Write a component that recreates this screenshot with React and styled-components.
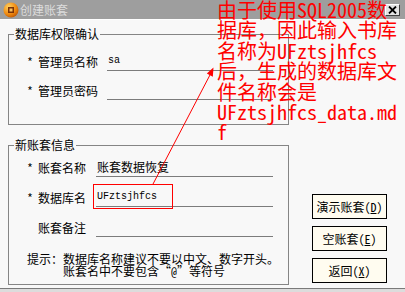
import React from "react";
import styled, { createGlobalStyle } from "styled-components";

const CJK = `"Noto Sans Mono CJK SC", "Noto Sans CJK SC", "Liberation Mono", monospace`;

const GlobalStyle = createGlobalStyle`
  html, body {
    margin: 0;
    padding: 0;
    background: #ffffff;
  }
  body {
    font-family: ${CJK};
    font-size: 12px;
    color: #000;
  }
`;

function App() {
  return (
    <StWindow>
      <GlobalStyle />
      <StTitleBar>
        <StTitleLeft>
          <CoinIcon />
          <StTitleText>创建账套</StTitleText>
        </StTitleLeft>
        <StCloseButton>
          <svg width="9" height="8" viewBox="0 0 9 8">
            <path d="M1 0.5 L8 7.5 M8 0.5 L1 7.5" stroke="#000" strokeWidth="1.8" />
          </svg>
        </StCloseButton>
      </StTitleBar>

      <StBody>
        <StLeftColumn>
          <StGroup $padTop={10} $padBottom={24}>
            <StLegend>数据库权限确认</StLegend>
            <StRows $gap={9}>
              <StRow>
                <StLabel $width={80}>
                  <StStar>*</StStar>管理员名称
                </StLabel>
                <StInput $width={166} $latin>sa</StInput>
              </StRow>
              <StRow>
                <StLabel $width={80}>
                  <StStar>*</StStar>管理员密码
                </StLabel>
                <StInput $width={166} />
              </StRow>
            </StRows>
          </StGroup>

          <StGroup $padTop={5} $padBottom={7}>
            <StLegend>新账套信息</StLegend>
            <StRows $gap={10}>
              <StRow>
                <StLabel $width={69}>
                  <StStar>*</StStar>账套名称
                </StLabel>
                <StInput $width={177}>账套数据恢复</StInput>
              </StRow>
              <StRow>
                <StLabel $width={69}>
                  <StStar>*</StStar>数据库名
                </StLabel>
                <StInput $width={177} $latin>
                  UFztsjhfcs
                  <StHighlight />
                </StInput>
              </StRow>
              <StRow>
                <StLabel $width={69}>
                  <StStar />账套备注
                </StLabel>
                <StInput $width={177} />
              </StRow>
            </StRows>
            <StHint>
              <span>提示：</span>
              <div>
                <div>数据库名称建议不要以中文、数字开头。</div>
                <div>账套名中不要包含“@”等符号</div>
              </div>
            </StHint>
          </StGroup>
        </StLeftColumn>

        <StButtonColumn>
          <StButton>
            演示账套(<u>D</u>)
          </StButton>
          <StButton>
            空账套(<u>E</u>)
          </StButton>
          <StButton>
            返回(<u>X</u>)
          </StButton>
        </StButtonColumn>
      </StBody>

      <StBottomStrip />

      <StNote>
        <div>由于使用SQL2005数</div>
        <div>据库，因此输入书库</div>
        <div>名称为UFztsjhfcs</div>
        <div>后，生成的数据库文</div>
        <div>件名称会是</div>
        <div>UFztsjhfcs_data.md</div>
        <div>f</div>
      </StNote>

      <StArrow width="405" height="292" viewBox="0 0 405 292">
        <line x1="152.5" y1="185" x2="211" y2="73" stroke="#ff0000" strokeWidth="1" />
        <polygon points="213.5,67.5 212.8,76.8 206.8,73.6" fill="#ff0000" />
      </StArrow>
    </StWindow>
  );
}

function CoinIcon() {
  return (
    <svg width="16" height="16" viewBox="0 0 16 16">
      <defs>
        <radialGradient id="coin" cx="0.35" cy="0.3" r="0.8">
          <stop offset="0" stopColor="#ffd060" />
          <stop offset="0.6" stopColor="#f08a10" />
          <stop offset="1" stopColor="#b85000" />
        </radialGradient>
      </defs>
      <circle cx="8" cy="8" r="7.5" fill="url(#coin)" />
      <rect x="5" y="5" width="6" height="6" fill="#7a3208" />
      <rect x="6.5" y="6.5" width="3" height="3" fill="#f6c060" />
    </svg>
  );
}

export default App;

const StWindow = styled.div`
  position: relative;
  width: 405px;
  height: 292px;
  overflow: hidden;
  background: #f8f8f8;
  display: flex;
  flex-direction: column;
`;

const StTitleBar = styled.div`
  height: 19px;
  flex: none;
  background: #9e9e9e;
  border-bottom: 1px solid #ffffff;
  display: flex;
  align-items: center;
  justify-content: space-between;
  padding: 0 5px 0 3px;
`;

const StTitleLeft = styled.div`
  display: flex;
  align-items: center;
  gap: 1px;
`;

const StTitleText = styled.span`
  font-family: "Noto Sans CJK SC", sans-serif;
  font-size: 12px;
  color: #dcdcdc;
`;

const StCloseButton = styled.div`
  width: 15px;
  height: 12px;
  box-sizing: border-box;
  background: #e4e4e4;
  border: 1px solid;
  border-color: #ffffff #404040 #404040 #ffffff;
  display: flex;
  align-items: center;
  justify-content: center;
`;

const StBody = styled.div`
  flex: 1;
  display: flex;
  padding: 7px 0 0 8px;
`;

const StLeftColumn = styled.div`
  width: 281px;
  display: flex;
  flex-direction: column;
  gap: 13px;
`;

const StGroup = styled.fieldset`
  margin: 0;
  padding: ${p => p.$padTop}px 0 ${p => p.$padBottom}px 0;
  border: 1px solid #858585;
  min-width: 0;
`;

const StLegend = styled.legend`
  margin-left: 5px;
  padding: 0 1px;
  font-size: 12px;
  line-height: 14px;
  height: 14px;
`;

const StRows = styled.div`
  display: flex;
  flex-direction: column;
  gap: ${p => p.$gap}px;
`;

const StRow = styled.div`
  display: flex;
  align-items: center;
  height: 20px;
  padding-left: 18px;
`;

const StLabel = styled.div`
  width: ${p => p.$width}px;
  flex: none;
  display: flex;
  align-items: center;
  white-space: nowrap;
`;

const StStar = styled.span`
  display: inline-block;
  width: 11px;
`;

const StInput = styled.div`
  position: relative;
  width: ${p => p.$width}px;
  height: 20px;
  box-sizing: border-box;
  border-bottom: 1px solid #7c7c7c;
  padding-left: 1px;
  display: flex;
  align-items: center;
  white-space: nowrap;
  font-family: ${p => (p.$latin ? `"Liberation Mono", monospace` : CJK)};
  font-size: ${p => (p.$latin ? "10px" : "12px")};
`;

const StHighlight = styled.div`
  position: absolute;
  left: -3px;
  top: -3px;
  width: 80px;
  height: 25px;
  box-sizing: border-box;
  border: 1px solid #ff0000;
`;

const StHint = styled.div`
  display: flex;
  margin-top: 16px;
  padding-left: 18px;
  line-height: 12px;
  white-space: nowrap;
`;

const StButtonColumn = styled.div`
  margin: 167px 0 0 23px;
  display: flex;
  flex-direction: column;
  gap: 7px;
`;

const StButton = styled.div`
  width: 75px;
  height: 25px;
  box-sizing: border-box;
  border: 1px solid #000;
  background: #fffcf0;
  display: flex;
  align-items: center;
  justify-content: center;
  white-space: nowrap;

  u {
    text-underline-offset: 1px;
  }
`;

const StBottomStrip = styled.div`
  height: 3px;
  flex: none;
  border-top: 1px solid #7a7a7a;
  background: #dcdcdc;
`;

const StNote = styled.div`
  position: absolute;
  left: 217px;
  top: 0;
  font-family: ${CJK};
  font-size: 20px;
  line-height: 20.4px;
  color: #ff0000;
  white-space: nowrap;
`;

const StArrow = styled.svg`
  position: absolute;
  left: 0;
  top: 0;
  pointer-events: none;
`;
